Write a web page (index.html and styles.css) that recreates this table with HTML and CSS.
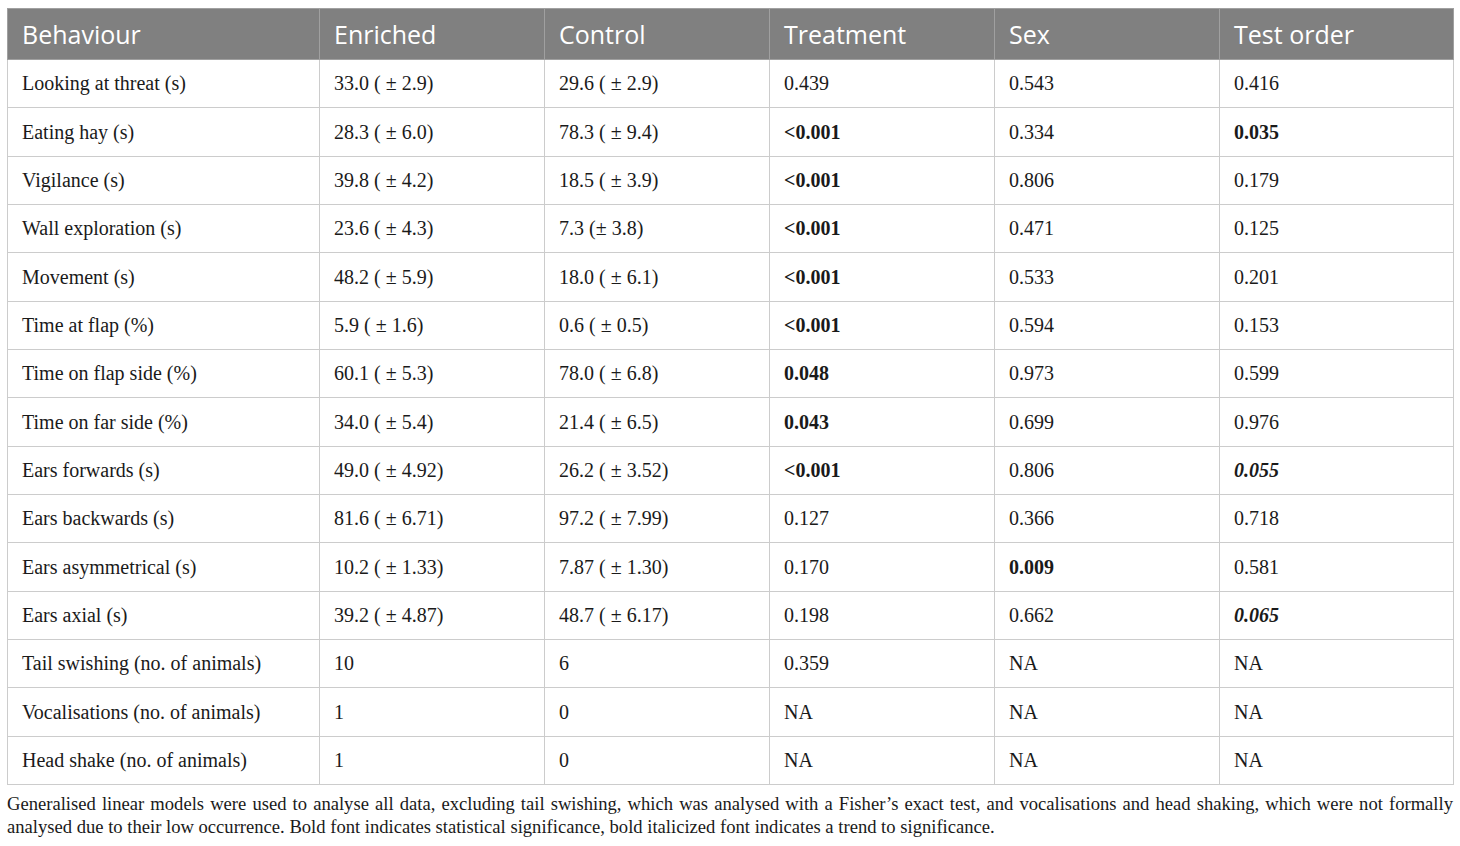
FILE: index.html
```html
<!DOCTYPE html>
<html>
<head>
<meta charset="utf-8">
<link rel="stylesheet" href="styles.css">
</head>
<body>
<div class="wrap">
<table class="data">
<colgroup>
<col class="c1"><col class="c2"><col class="c3"><col class="c4"><col class="c5"><col class="c6">
</colgroup>
<thead>
<tr><th>Behaviour</th><th>Enriched</th><th>Control</th><th>Treatment</th><th>Sex</th><th>Test order</th></tr>
</thead>
<tbody>
<tr><td>Looking at threat (s)</td><td>33.0 ( ± 2.9)</td><td>29.6 ( ± 2.9)</td><td>0.439</td><td>0.543</td><td>0.416</td></tr>
<tr><td>Eating hay (s)</td><td>28.3 ( ± 6.0)</td><td>78.3 ( ± 9.4)</td><td><b>&lt;0.001</b></td><td>0.334</td><td><b>0.035</b></td></tr>
<tr><td>Vigilance (s)</td><td>39.8 ( ± 4.2)</td><td>18.5 ( ± 3.9)</td><td><b>&lt;0.001</b></td><td>0.806</td><td>0.179</td></tr>
<tr><td>Wall exploration (s)</td><td>23.6 ( ± 4.3)</td><td>7.3 (± 3.8)</td><td><b>&lt;0.001</b></td><td>0.471</td><td>0.125</td></tr>
<tr><td>Movement (s)</td><td>48.2 ( ± 5.9)</td><td>18.0 ( ± 6.1)</td><td><b>&lt;0.001</b></td><td>0.533</td><td>0.201</td></tr>
<tr><td>Time at flap (%)</td><td>5.9 ( ± 1.6)</td><td>0.6 ( ± 0.5)</td><td><b>&lt;0.001</b></td><td>0.594</td><td>0.153</td></tr>
<tr><td>Time on flap side (%)</td><td>60.1 ( ± 5.3)</td><td>78.0 ( ± 6.8)</td><td><b>0.048</b></td><td>0.973</td><td>0.599</td></tr>
<tr><td>Time on far side (%)</td><td>34.0 ( ± 5.4)</td><td>21.4 ( ± 6.5)</td><td><b>0.043</b></td><td>0.699</td><td>0.976</td></tr>
<tr><td>Ears forwards (s)</td><td>49.0 ( ± 4.92)</td><td>26.2 ( ± 3.52)</td><td><b>&lt;0.001</b></td><td>0.806</td><td><b><i>0.055</i></b></td></tr>
<tr><td>Ears backwards (s)</td><td>81.6 ( ± 6.71)</td><td>97.2 ( ± 7.99)</td><td>0.127</td><td>0.366</td><td>0.718</td></tr>
<tr><td>Ears asymmetrical (s)</td><td>10.2 ( ± 1.33)</td><td>7.87 ( ± 1.30)</td><td>0.170</td><td><b>0.009</b></td><td>0.581</td></tr>
<tr><td>Ears axial (s)</td><td>39.2 ( ± 4.87)</td><td>48.7 ( ± 6.17)</td><td>0.198</td><td>0.662</td><td><b><i>0.065</i></b></td></tr>
<tr><td>Tail swishing (no. of animals)</td><td>10</td><td>6</td><td>0.359</td><td>NA</td><td>NA</td></tr>
<tr><td>Vocalisations (no. of animals)</td><td>1</td><td>0</td><td>NA</td><td>NA</td><td>NA</td></tr>
<tr><td>Head shake (no. of animals)</td><td>1</td><td>0</td><td>NA</td><td>NA</td><td>NA</td></tr>
</tbody>
</table>
<p class="note">Generalised linear models were used to analyse all data, excluding tail swishing, which was analysed with a Fisher’s exact test, and vocalisations and head shaking, which were not formally analysed due to their low occurrence. Bold font indicates statistical significance, bold italicized font indicates a trend to significance.</p>
</div>
</body>
</html>
```
FILE: styles.css
```css
html, body {
  margin: 0;
  padding: 0;
  background: #ffffff;
}
.wrap {
  padding: 8px 7px 0 7px;
  width: 1446px;
}
.data {
  border-collapse: collapse;
  width: 1446px;
  table-layout: fixed;
  font-family: "Liberation Serif", "Times New Roman", serif;
  font-size: 20px;
  color: #1a1a1a;
}
.c1 { width: 312px; }
.c2 { width: 225px; }
.c3 { width: 225px; }
.c4 { width: 225px; }
.c5 { width: 225px; }
.c6 { width: 234px; }
.data th {
  background: #808080;
  color: #ffffff;
  font-family: "Open Sans", "Noto Sans", sans-serif;
  font-weight: 400;
  font-size: 25px;
  text-align: left;
  height: 51px;
  padding: 0 14px;
  border: 1px solid #a0a0a0;
  box-sizing: border-box;
}
.data td {
  height: 48.35px;
  padding: 0 14px;
  border: 1px solid #cccccc;
  box-sizing: border-box;
  white-space: nowrap;
}
.data b {
  font-weight: 700;
}
.note {
  margin: 7px 0 0 0;
  font-family: "Liberation Serif", "Times New Roman", serif;
  font-size: 18.6px;
  line-height: 23px;
  color: #1a1a1a;
  text-align: justify;
}
```
